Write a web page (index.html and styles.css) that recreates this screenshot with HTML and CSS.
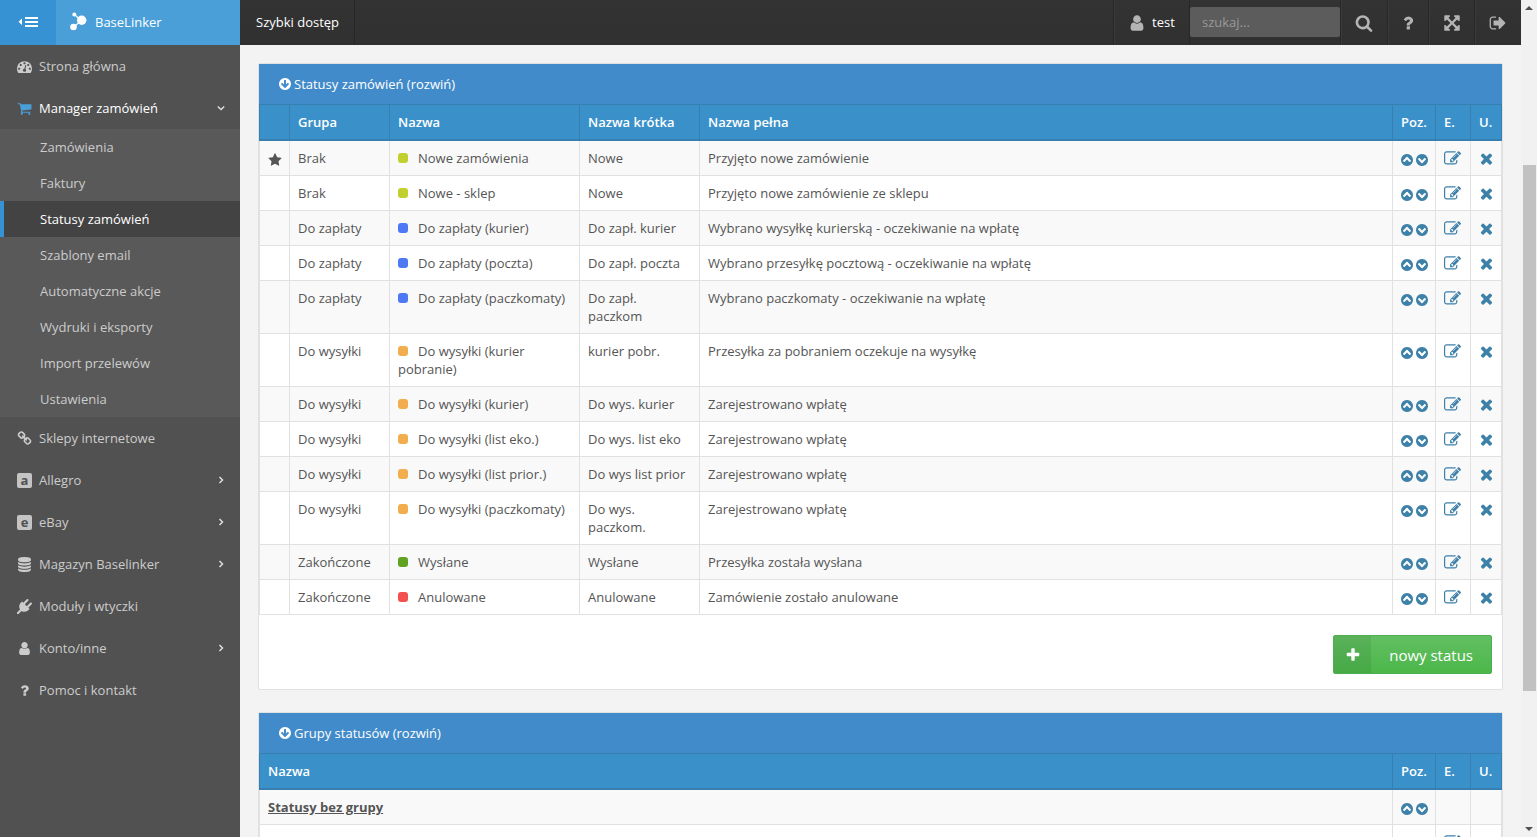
FILE: index.html
```html
<!DOCTYPE html>
<html lang="pl">
<head>
<meta charset="utf-8">
<title>BaseLinker – Statusy zamówień</title>
<link rel="stylesheet" href="styles.css">
</head>
<body>
<svg class="sprite" aria-hidden="true">
  <symbol id="star" viewBox="0 0 1792 1792"><path d="M1728 647q0 22-26 48l-363 354 86 500q1 7 1 20 0 21-10.5 35.5t-30.5 14.5q-19 0-40-12l-449-236-449 236q-22 12-40 12-21 0-31.5-14.5t-10.5-35.5q0-6 2-20l86-500-364-354q-25-27-25-48 0-37 56-46l502-73 225-455q19-41 49-41t49 41l225 455 502 73q56 9 56 46z"/></symbol>
  <symbol id="arrow-down" viewBox="0 0 1792 1792"><path d="M1412 897q0-27-18-45l-91-91q-18-18-45-18t-45 18l-189 189v-502q0-26-19-45t-45-19h-128q-26 0-45 19t-19 45v502l-189-189q-19-19-45-19t-45 19l-91 91q-18 18-18 45t18 45l362 362 91 91q18 18 45 18t45-18l91-91 362-362q18-18 18-45zm252-1q0 209-103 385.5t-279.5 279.5-385.5 103-385.5-103-279.5-279.5-103-385.5 103-385.5 279.5-279.5 385.5-103 385.5 103 279.5 279.5 103 385.5z"/></symbol>
  <symbol id="up" viewBox="0 0 1792 1792"><path d="M1293 1139l102-102q19-19 19-45t-19-45l-454-454q-19-19-45-19t-45 19l-454 454q-19 19-19 45t19 45l102 102q19 19 45 19t45-19l307-307 307 307q19 19 45 19t45-19zm371-243q0 209-103 385.5t-279.5 279.5-385.5 103-385.5-103-279.5-279.5-103-385.5 103-385.5 279.5-279.5 385.5-103 385.5 103 279.5 279.5 103 385.5z"/></symbol>
  <symbol id="down" viewBox="0 0 1792 1792"><path d="M941 1299l454-454q19-19 19-45t-19-45l-102-102q-19-19-45-19t-45 19l-307 307-307-307q-19-19-45-19t-45 19l-102 102q-19 19-19 45t19 45l454 454q19 19 45 19t45-19zm723-403q0 209-103 385.5t-279.5 279.5-385.5 103-385.5-103-279.5-279.5-103-385.5 103-385.5 279.5-279.5 385.5-103 385.5 103 279.5 279.5 103 385.5z"/></symbol>
  <symbol id="times" viewBox="0 0 1792 1792"><path d="M1490 1322q0 40-28 68l-136 136q-28 28-68 28t-68-28l-294-294-294 294q-28 28-68 28t-68-28l-136-136q-28-28-28-68t28-68l294-294-294-294q-28-28-28-68t28-68l136-136q28-28 68-28t68 28l294 294 294-294q28-28 68-28t68 28l136 136q28 28 28 68t-28 68l-294 294 294 294q28 28 28 68z"/></symbol>
  <symbol id="edit" viewBox="0 0 1792 1792"><path d="M888 1184l116-116-152-152-116 116v56h96v96h56zm440-720q-16-16-33 1l-350 350q-17 17-1 33t33-1l350-350q17-17 1-33zm80 594v190q0 119-84.500 203.500t-203.500 84.500h-832q-119 0-203.500-84.500t-84.500-203.500v-832q0-119 84.500-203.500t203.500-84.500h832q63 0 117 25 15 7 18 23 3 17-9 29l-49 49q-14 14-32 8-23-6-45-6h-832q-66 0-113 47t-47 113v832q0 66 47 113t113 47h832q66 0 113-47t47-113v-126q0-13 9-22l64-64q15-15 35-7t20 29zm-96-738l288 288-672 672h-288v-288zm444 132l-92 92-288-288 92-92q28-28 68-28t68 28l152 152q28 28 28 68t-28 68z"/></symbol>
  <symbol id="search" viewBox="0 0 1792 1792"><path d="M1216 832q0-185-131.500-316.500t-316.500-131.500-316.500 131.500-131.500 316.500 131.500 316.500 316.500 131.500 316.500-131.500 131.500-316.500zm512 832q0 52-38 90t-90 38q-54 0-90-38l-343-342q-179 124-399 124-143 0-273.500-55.500t-225-150-150-225-55.500-273.500 55.500-273.500 150-225 225-150 273.500-55.500 273.500 55.500 225 150 150 225 55.500 273.500q0 220-124 399l343 343q37 37 37 90z"/></symbol>
  <symbol id="plus" viewBox="0 0 1792 1792"><path d="M1600 736v192q0 40-28 68t-68 28h-416v416q0 40-28 68t-68 28h-192q-40 0-68-28t-28-68v-416h-416q-40 0-68-28t-28-68v-192q0-40 28-68t68-28h416v-416q0-40 28-68t68-28h192q40 0 68 28t28 68v416h416q40 0 68 28t28 68z"/></symbol>
  <symbol id="user" viewBox="0 0 1792 1792"><path d="M1536 1399q0 109-62.500 187t-150.500 78h-854q-88 0-150.500-78t-62.500-187q0-85 8.500-160.500t31.500-152 58.500-131 94-89 134.500-34.500q131 128 313 128t313-128q76 0 134.500 34.500t94 89 58.500 131 31.500 152 8.500 160.500zm-256-887q0 159-112.500 271.500t-271.500 112.500-271.500-112.500-112.500-271.500 112.500-271.500 271.500-112.500 271.500 112.500 112.500 271.500z"/></symbol>
  <symbol id="question" viewBox="0 0 1792 1792"><path d="M1088 1256v240q0 16-12 28t-28 12h-240q-16 0-28-12t-12-28v-240q0-16 12-28t28-12h240q16 0 28 12t12 28zm316-600q0 54-15.500 101t-35 76.500-55 59.500-57.500 43.500-61 35.500q-41 23-68.500 65t-27.500 67q0 17-12 32.500t-28 15.500h-240q-15 0-25.500-18.500t-10.500-37.500v-45q0-83 65-156.500t143-108.500q59-27 84-56t25-76q0-42-46.500-74t-107.500-32q-65 0-108 29-35 25-107 115-13 16-31 16-12 0-25-8l-164-125q-13-10-15.500-25t5.500-28q160-266 464-266 80 0 161 31t146 83 106 127.500 41 158.500z"/></symbol>
  <symbol id="expand" viewBox="0 0 1792 1792"><path d="M1411 541l-355 355 355 355 144-144q29-31 70-14 39 17 39 59v448q0 26-19 45t-45 19h-448q-42 0-59-40-17-39 14-69l144-144-355-355-355 355 144 144q31 30 14 69-17 40-59 40h-448q-26 0-45-19t-19-45v-448q0-42 40-59 39-17 69 14l144 144 355-355-355-355-144 144q-19 19-45 19-12 0-24-5-40-17-40-59v-448q0-26 19-45t45-19h448q42 0 59 40 17 39-14 69l-144 144 355 355 355-355-144-144q-31-30-14-69 17-40 59-40h448q26 0 45 19t19 45v448q0 42-39 59-13 5-25 5-26 0-45-19z"/></symbol>
  <symbol id="signout" viewBox="0 0 1792 1792"><path d="M704 1440q0 4 1 20t.5 26.500-3 23.500-10 19.500-20.500 6.500h-320q-119 0-203.500-84.500t-84.500-203.500v-704q0-119 84.500-203.500t203.500-84.500h320q13 0 22.500 9.500t9.500 22.500q0 4 1 20t.5 26.500-3 23.500-10 19.500-20.500 6.500h-320q-66 0-113 47t-47 113v704q0 66 47 113t113 47h312l11.500 1 11.500 3 8 5.500 7 9 2 13.500zm928-544q0 26-19 45l-544 544q-19 19-45 19t-45-19-19-45v-288h-448q-26 0-45-19t-19-45v-384q0-26 19-45t45-19h448v-288q0-26 19-45t45-19 45 19l544 544q19 19 19 45z"/></symbol>
  <symbol id="gauge" viewBox="0 0 1792 1792"><path d="M384 1152q0-53-37.500-90.500t-90.500-37.500-90.500 37.500-37.500 90.500 37.500 90.500 90.500 37.500 90.500-37.500 37.500-90.500zm192-448q0-53-37.500-90.500t-90.500-37.500-90.500 37.500-37.500 90.500 37.500 90.500 90.500 37.500 90.500-37.500 37.500-90.500zm428 481l101-382q6-26-7.500-48.500t-38.500-29.500-48 6.500-30 39.500l-101 382q-60 5-107 43.500t-63 98.500q-20 77 20 146t117 89 146-20 89-117q16-60-6-117t-72-91zm660-33q0-53-37.500-90.500t-90.500-37.500-90.500 37.500-37.500 90.500 37.500 90.500 90.500 37.500 90.500-37.500 37.500-90.500zm-640-640q0-53-37.500-90.500t-90.500-37.500-90.500 37.500-37.500 90.500 37.500 90.500 90.500 37.500 90.500-37.500 37.500-90.500zm448 192q0-53-37.500-90.500t-90.500-37.500-90.500 37.500-37.500 90.500 37.500 90.500 90.500 37.500 90.500-37.500 37.500-90.500zm320 448q0 261-141 483-19 29-54 29h-1402q-35 0-54-29-141-221-141-483 0-182 71-348t191-286 286-191 348-71 348 71 286 191 191 286 71 348z"/></symbol>
  <symbol id="cart" viewBox="0 0 1792 1792"><path d="M704 1536q0 52-38 90t-90 38-90-38-38-90 38-90 90-38 90 38 38 90zm896 0q0 52-38 90t-90 38-90-38-38-90 38-90 90-38 90 38 38 90zm128-1088v512q0 24-16.500 42.500t-40.500 21.500l-1044 122q13 60 13 70 0 16-24 64h920q26 0 45 19t19 45-19 45-45 19h-1024q-26 0-45-19t-19-45q0-11 8-31.500t16-36 21.500-40 15.500-29.500l-177-823h-204q-26 0-45-19t-19-45 19-45 45-19h256q16 0 28.500 6.500t19.500 15.500 13 24.500 8 26 5.500 29.500 4.500 26h1201q26 0 45 19t19 45z"/></symbol>
  <symbol id="link" viewBox="0 0 1792 1792"><path d="M1520 1216q0-40-28-68l-208-208q-28-28-68-28-42 0-72 32 3 3 19 18.500t21.500 21.500 15 19 13 25.500 3.500 27.500q0 40-28 68t-68 28q-15 0-27.500-3.500t-25.500-13-19-15-21.500-21.500-18.500-19q-33 31-33 73 0 40 28 68l206 207q27 27 68 27 40 0 68-26l147-146q28-28 28-67zm-703-705q0-40-28-68l-206-207q-28-28-68-28-39 0-68 27l-147 146q-28 28-28 67 0 40 28 68l208 208q27 27 68 27 42 0 72-31-3-3-19-18.500t-21.500-21.500-15-19-13-25.500-3.500-27.500q0-40 28-68t68-28q15 0 27.500 3.500t25.500 13 19 15 21.500 21.500 18.500 19q33-31 33-73zm895 705q0 120-85 203l-147 146q-83 83-203 83-121 0-204-85l-206-207q-83-83-83-203 0-123 88-209l-88-88q-86 88-208 88-120 0-204-84l-208-208q-84-84-84-204t85-203l147-146q83-83 203-83 121 0 204 85l206 207q83 83 83 203 0 123-88 209l88 88q86-88 208-88 120 0 204 84l208 208q84 84 84 204z"/></symbol>
  <symbol id="database" viewBox="0 0 1792 1792"><path d="M896 768q237 0 443-43t325-127v170q0 69-103 128t-280 93.500-385 34.500-385-34.500-280-93.500-103-128v-170q119 84 325 127t443 43zm0 768q237 0 443-43t325-127v170q0 69-103 128t-280 93.500-385 34.500-385-34.500-280-93.500-103-128v-170q119 84 325 127t443 43zm0-384q237 0 443-43t325-127v170q0 69-103 128t-280 93.500-385 34.500-385-34.500-280-93.500-103-128v-170q119 84 325 127t443 43zm0-1152q208 0 385 34.500t280 93.500 103 128v128q0 69-103 128t-280 93.500-385 34.500-385-34.500-280-93.500-103-128v-128q0-69 103-128t280-93.500 385-34.500z"/></symbol>
  <symbol id="plug" viewBox="0 0 1792 1792"><path d="M1755 453q37 38 37 90.500t-37 90.500l-401 400 150 150-160 160q-163 163-389.500 186.500t-411.500-100.500l-362 362h-181v-181l362-362q-124-185-100.500-411.500t186.500-389.500l160-160 150 150 400-401q38-37 91-37t90 37 37 90.500-37 90.500l-400 401 234 234 401-400q38-37 91-37t90 37z"/></symbol>
  <symbol id="chev-right" viewBox="0 0 8 8"><path d="M2.500 1 5.500 4 2.500 7" fill="none" stroke="currentColor" stroke-width="1.500"/></symbol>
  <symbol id="chev-down" viewBox="0 0 8 8"><path d="M.8 2.500 4 5.500 7.200 2.500" fill="none" stroke="currentColor" stroke-width="1.500"/></symbol>
</svg>

<div class="app">
  <header class="topbar">
    <button class="toggle" type="button" aria-label="Zwiń menu">
      <svg width="20" height="12" viewBox="0 0 20 12"><path d="M4 2.500v6.500L.5 5.750zM7 1h13v2H7zM7 5h13v2H7zM7 9h13v2H7z" fill="currentColor"/></svg>
    </button>
    <a class="brand" href="#">
      <svg width="17" height="19" viewBox="0 0 17 19"><path d="M4.500 2.500 11 8.500 4 15" fill="none" stroke="currentColor" stroke-width="1.200"/><circle cx="4.300" cy="2.400" r="2" fill="currentColor"/><circle cx="11.700" cy="8.300" r="4.700" fill="currentColor"/><circle cx="3.500" cy="15" r="3.300" fill="currentColor"/></svg>
      <span>BaseLinker</span>
    </a>
    <a class="quick" href="#">Szybki dostęp</a>
    <div class="tools">
      <a class="tool account" href="#"><svg class="icon icon-18"><use href="#user"/></svg><span>test</span></a>
      <input class="search" type="text" placeholder="szukaj..." aria-label="Szukaj">
      <button class="tool tool-search" type="button" aria-label="Szukaj"><svg class="icon icon-18"><use href="#search"/></svg></button>
      <button class="tool tool-help" type="button" aria-label="Pomoc"><svg class="icon icon-18"><use href="#question"/></svg></button>
      <button class="tool" type="button" aria-label="Pełny ekran"><svg class="icon icon-18"><use href="#expand"/></svg></button>
      <button class="tool tool-exit" type="button" aria-label="Wyloguj"><svg class="icon icon-18"><use href="#signout"/></svg></button>
    </div>
  </header>

  <nav class="sidebar">
    <a class="item" href="#"><svg class="icon"><use href="#gauge"/></svg><span>Strona główna</span></a>
    <a class="item open" href="#"><svg class="icon"><use href="#cart"/></svg><span>Manager zamówień</span><svg class="chev"><use href="#chev-down"/></svg></a>
    <div class="submenu">
      <a href="#">Zamówienia</a>
      <a href="#">Faktury</a>
      <a class="active" href="#">Statusy zamówień</a>
      <a href="#">Szablony email</a>
      <a href="#">Automatyczne akcje</a>
      <a href="#">Wydruki i eksporty</a>
      <a href="#">Import przelewów</a>
      <a href="#">Ustawienia</a>
    </div>
    <a class="item" href="#"><svg class="icon"><use href="#link"/></svg><span>Sklepy internetowe</span></a>
    <a class="item" href="#"><b class="letter">a</b><span>Allegro</span><svg class="chev"><use href="#chev-right"/></svg></a>
    <a class="item" href="#"><b class="letter">e</b><span>eBay</span><svg class="chev"><use href="#chev-right"/></svg></a>
    <a class="item" href="#"><svg class="icon"><use href="#database"/></svg><span>Magazyn Baselinker</span><svg class="chev"><use href="#chev-right"/></svg></a>
    <a class="item" href="#"><svg class="icon"><use href="#plug"/></svg><span>Moduły i wtyczki</span></a>
    <a class="item" href="#"><svg class="icon"><use href="#user"/></svg><span>Konto/inne</span><svg class="chev"><use href="#chev-right"/></svg></a>
    <a class="item" href="#"><svg class="icon"><use href="#question"/></svg><span>Pomoc i kontakt</span></a>
  </nav>

  <main class="content">
    <section class="panel">
      <h2 class="panel-title"><svg class="icon"><use href="#arrow-down"/></svg>Statusy zamówień (rozwiń)</h2>
      <table class="grid">
        <colgroup><col class="c-star"><col class="c-group"><col class="c-name"><col class="c-short"><col><col class="c-pos"><col class="c-edit"><col class="c-del"></colgroup>
        <thead><tr><th></th><th>Grupa</th><th>Nazwa</th><th>Nazwa krótka</th><th>Nazwa pełna</th><th>Poz.</th><th>E.</th><th>U.</th></tr></thead>
        <tbody id="statuses"></tbody>
      </table>
      <div class="panel-actions">
        <button class="add" type="button"><span class="add-icon"><svg class="icon"><use href="#plus"/></svg></span><span class="add-text">nowy status</span></button>
      </div>
    </section>

    <section class="panel">
      <h2 class="panel-title"><svg class="icon"><use href="#arrow-down"/></svg>Grupy statusów (rozwiń)</h2>
      <table class="grid">
        <colgroup><col><col class="c-pos"><col class="c-edit"><col class="c-del"></colgroup>
        <thead><tr><th>Nazwa</th><th>Poz.</th><th>E.</th><th>U.</th></tr></thead>
        <tbody>
          <tr><td><a class="group-link" href="#">Statusy bez grupy</a></td><td class="act"><a href="#" aria-label="W górę"><svg class="icon"><use href="#up"/></svg></a><a href="#" aria-label="W dół"><svg class="icon"><use href="#down"/></svg></a></td><td></td><td></td></tr>
          <tr><td></td><td class="act"><svg class="icon faint"><use href="#up"/></svg><svg class="icon faint"><use href="#down"/></svg></td><td class="act act-edit"><a href="#" aria-label="Edytuj"><svg class="icon icon-17"><use href="#edit"/></svg></a></td><td class="act"><a href="#" aria-label="Usuń"><svg class="icon icon-17"><use href="#times"/></svg></a></td></tr>
        </tbody>
      </table>
    </section>
  </main>

  <div class="scrollbar" aria-hidden="true">
    <svg width="8" height="4" viewBox="0 0 8 4"><path d="M0 4 4 0l4 4z" fill="#505050"/></svg>
    <div class="track"><div class="thumb"></div></div>
    <svg width="8" height="4" viewBox="0 0 8 4"><path d="M0 0l4 4 4-4z" fill="#505050"/></svg>
  </div>
</div>
<script src="app.js"></script>
</body>
</html>
```
FILE: styles.css
```css
* { box-sizing: border-box; }

body {
  margin: 0;
  font: 13px/18px "Open Sans", "Noto Sans", sans-serif;
  color: #555;
  background: #f3f3f3;
}

a { color: inherit; text-decoration: none; }
button { border: 0; padding: 0; font: inherit; color: inherit; cursor: pointer; }

.sprite { display: none; }
.icon { width: 14px; height: 14px; fill: currentColor; flex: none; }
.icon-17 { width: 17px; height: 17px; }
.icon-18 { width: 18px; height: 18px; }

.app {
  display: grid;
  grid-template: 45px 1fr / 240px 1fr 16px;
  height: 100vh;
  overflow: hidden;
}

/* Top bar */
.topbar {
  grid-column: 1 / 3;
  display: flex;
  background: linear-gradient(#333, #303030);
  color: #fff;
}
.toggle {
  display: flex;
  align-items: center;
  justify-content: center;
  width: 56px;
  padding-bottom: 2px;
  background: #3792d3;
  color: #fff;
}
.brand {
  display: flex;
  align-items: center;
  gap: 8px;
  width: 184px;
  padding: 0 0 2px 14px;
  background: #4a9fd9;
}
.quick {
  display: flex;
  align-items: center;
  padding: 0 15px 2px 16px;
  border-right: 1px solid #262626;
}
.tools { display: flex; align-items: center; margin-left: auto; }
.tool {
  display: flex;
  align-items: center;
  justify-content: center;
  align-self: stretch;
  width: 46px;
  border-left: 1px solid #272727;
  box-shadow: inset 1px 0 #3a3a3a;
  background: none;
  color: #b4b4b4;
}
.tool-search { width: 47px; }
.tool-help { width: 41px; }
.tool-exit { width: 47px; }
.account { width: 77px; gap: 6px; border-right: 1px solid #272727; }
.account span { padding-bottom: 2px; color: #fff; }
.search {
  width: 150px;
  height: 30px;
  margin-bottom: 2px;
  padding: 0 12px;
  border: 0;
  border-radius: 2px;
  background: #5c5c5c;
  font: inherit;
  color: #fff;
}
.search::placeholder { color: #999; opacity: 1; }

/* Side menu */
.sidebar { background: #515151; color: #ccc; overflow: hidden; }
.item {
  display: flex;
  align-items: center;
  gap: 7px;
  height: 42px;
  padding: 0 15px 0 17px;
}
.item .icon { width: 15px; height: 15px; }
.open { color: #fff; }
.item.open .icon { color: #4a9fd9; }
.chev { width: 8px; height: 8px; margin-left: auto; color: #ddd; }
.letter {
  display: grid;
  place-items: center;
  width: 15px;
  height: 15px;
  border-radius: 2px;
  background: #c4c4c4;
  color: #515151;
  line-height: 12px;
}
.submenu { background: #595959; }
.submenu a {
  display: flex;
  align-items: center;
  height: 36px;
  padding-left: 36px;
  border-left: 4px solid transparent;
}
.submenu .active { border-color: #3792d3; background: #434343; color: #fff; }

/* Content */
.content { padding: 18px 18px 0; overflow: hidden; }
.panel {
  margin-bottom: 22px;
  border: 1px solid #e1e1e1;
  border-radius: 2px;
  background: #fff;
}
.panel-title {
  display: flex;
  align-items: center;
  gap: 2px;
  height: 40px;
  margin: 0;
  padding-left: 19px;
  background: #428bca;
  color: #fff;
  font-size: 13px;
  font-weight: 400;
}
.grid { width: 100%; table-layout: fixed; border-collapse: collapse; }
.c-star { width: 30px; }
.c-group { width: 100px; }
.c-name { width: 190px; }
.c-short { width: 120px; }
.c-pos { width: 43px; }
.c-edit { width: 35px; }
.c-del { width: 31px; }
.grid th, .grid td {
  padding: 8px;
  border: 1px solid #e1e1e1;
  text-align: left;
  vertical-align: top;
}
.grid th {
  border-color: #367fb0;
  border-bottom-width: 2px;
  background: #3a91ca;
  color: #fff;
  font-weight: 600;
}
.grid tbody tr:nth-child(odd) { background: #f9f9f9; }
.grid td .icon { display: inline-block; vertical-align: middle; }
.grid .act { padding: 8px 0 8px 7px; color: #3d80a8; white-space: nowrap; }
.grid .act-edit { padding-left: 8px; }
.act a { display: inline-block; height: 18px; vertical-align: top; }
.act a .icon { vertical-align: text-bottom; }
.act .icon + .icon, .act a + a { margin-left: 1px; }
.faint { opacity: .1; }
.dot {
  display: inline-block;
  width: 10px;
  height: 10px;
  margin-right: 10px;
  border-radius: 3px;
}
.lime { background: #c2d02f; }
.blue { background: #4f78f5; }
.orange { background: #f2ae4e; }
.green { background: #5fa320; }
.red { background: #f45050; }
.group-link { font-weight: 700; text-decoration: underline; }

.panel-actions { display: flex; justify-content: flex-end; padding: 20px 10px 15px; }
.add {
  display: flex;
  height: 39px;
  overflow: hidden;
  border: 1px solid #4cae4c;
  border-radius: 2px;
  background: linear-gradient(#62bf62, #4cb74a);
  color: #fff;
  font-size: 15px;
}
.add span { display: flex; align-items: center; align-self: stretch; }
.add-icon { justify-content: center; width: 37px; background: rgba(0, 0, 0, .07); }
.add-icon .icon { width: 16px; height: 16px; }
.add-text { padding: 0 18px; }

/* Scroll bar */
.scrollbar {
  grid-column: 3;
  grid-row: 1 / 3;
  display: flex;
  flex-direction: column;
  align-items: center;
  padding: 6px 0;
  background: #f1f1f1;
}
.track { flex: 1; align-self: stretch; display: flex; flex-direction: column; padding: 0 1px 0 2px; }
.track::before { content: ""; flex: 155; }
.track::after { content: ""; flex: 136; }
.thumb { flex: 526; background: #c1c1c1; }
```
FILE: app.js
```javascript
const statuses = [
  ["Brak", "lime", "Nowe zamówienia", "Nowe", "Przyjęto nowe zamówienie"],
  ["Brak", "lime", "Nowe - sklep", "Nowe", "Przyjęto nowe zamówienie ze sklepu"],
  ["Do zapłaty", "blue", "Do zapłaty (kurier)", "Do zapł. kurier", "Wybrano wysyłkę kurierską - oczekiwanie na wpłatę"],
  ["Do zapłaty", "blue", "Do zapłaty (poczta)", "Do zapł. poczta", "Wybrano przesyłkę pocztową - oczekiwanie na wpłatę"],
  ["Do zapłaty", "blue", "Do zapłaty (paczkomaty)", "Do zapł. paczkom", "Wybrano paczkomaty - oczekiwanie na wpłatę"],
  ["Do wysyłki", "orange", "Do wysyłki (kurier pobranie)", "kurier pobr.", "Przesyłka za pobraniem oczekuje na wysyłkę"],
  ["Do wysyłki", "orange", "Do wysyłki (kurier)", "Do wys. kurier", "Zarejestrowano wpłatę"],
  ["Do wysyłki", "orange", "Do wysyłki (list eko.)", "Do wys. list eko", "Zarejestrowano wpłatę"],
  ["Do wysyłki", "orange", "Do wysyłki (list prior.)", "Do wys list prior", "Zarejestrowano wpłatę"],
  ["Do wysyłki", "orange", "Do wysyłki (paczkomaty)", "Do wys. paczkom.", "Zarejestrowano wpłatę"],
  ["Zakończone", "green", "Wysłane", "Wysłane", "Przesyłka została wysłana"],
  ["Zakończone", "red", "Anulowane", "Anulowane", "Zamówienie zostało anulowane"]
];

const action = (icon, label, size = "") =>
  `<a href="#" aria-label="${label}"><svg class="icon ${size}"><use href="#${icon}"/></svg></a>`;

document.getElementById("statuses").innerHTML = statuses.map(([group, color, name, short, full], i) => `
  <tr>
    <td>${i === 0 ? '<svg class="icon"><use href="#star"/></svg>' : ""}</td>
    <td>${group}</td>
    <td><span class="dot ${color}"></span>${name}</td>
    <td>${short}</td>
    <td>${full}</td>
    <td class="act">${action("up", "W górę")}${action("down", "W dół")}</td>
    <td class="act act-edit">${action("edit", "Edytuj", "icon-17")}</td>
    <td class="act">${action("times", "Usuń", "icon-17")}</td>
  </tr>`).join("");
```
